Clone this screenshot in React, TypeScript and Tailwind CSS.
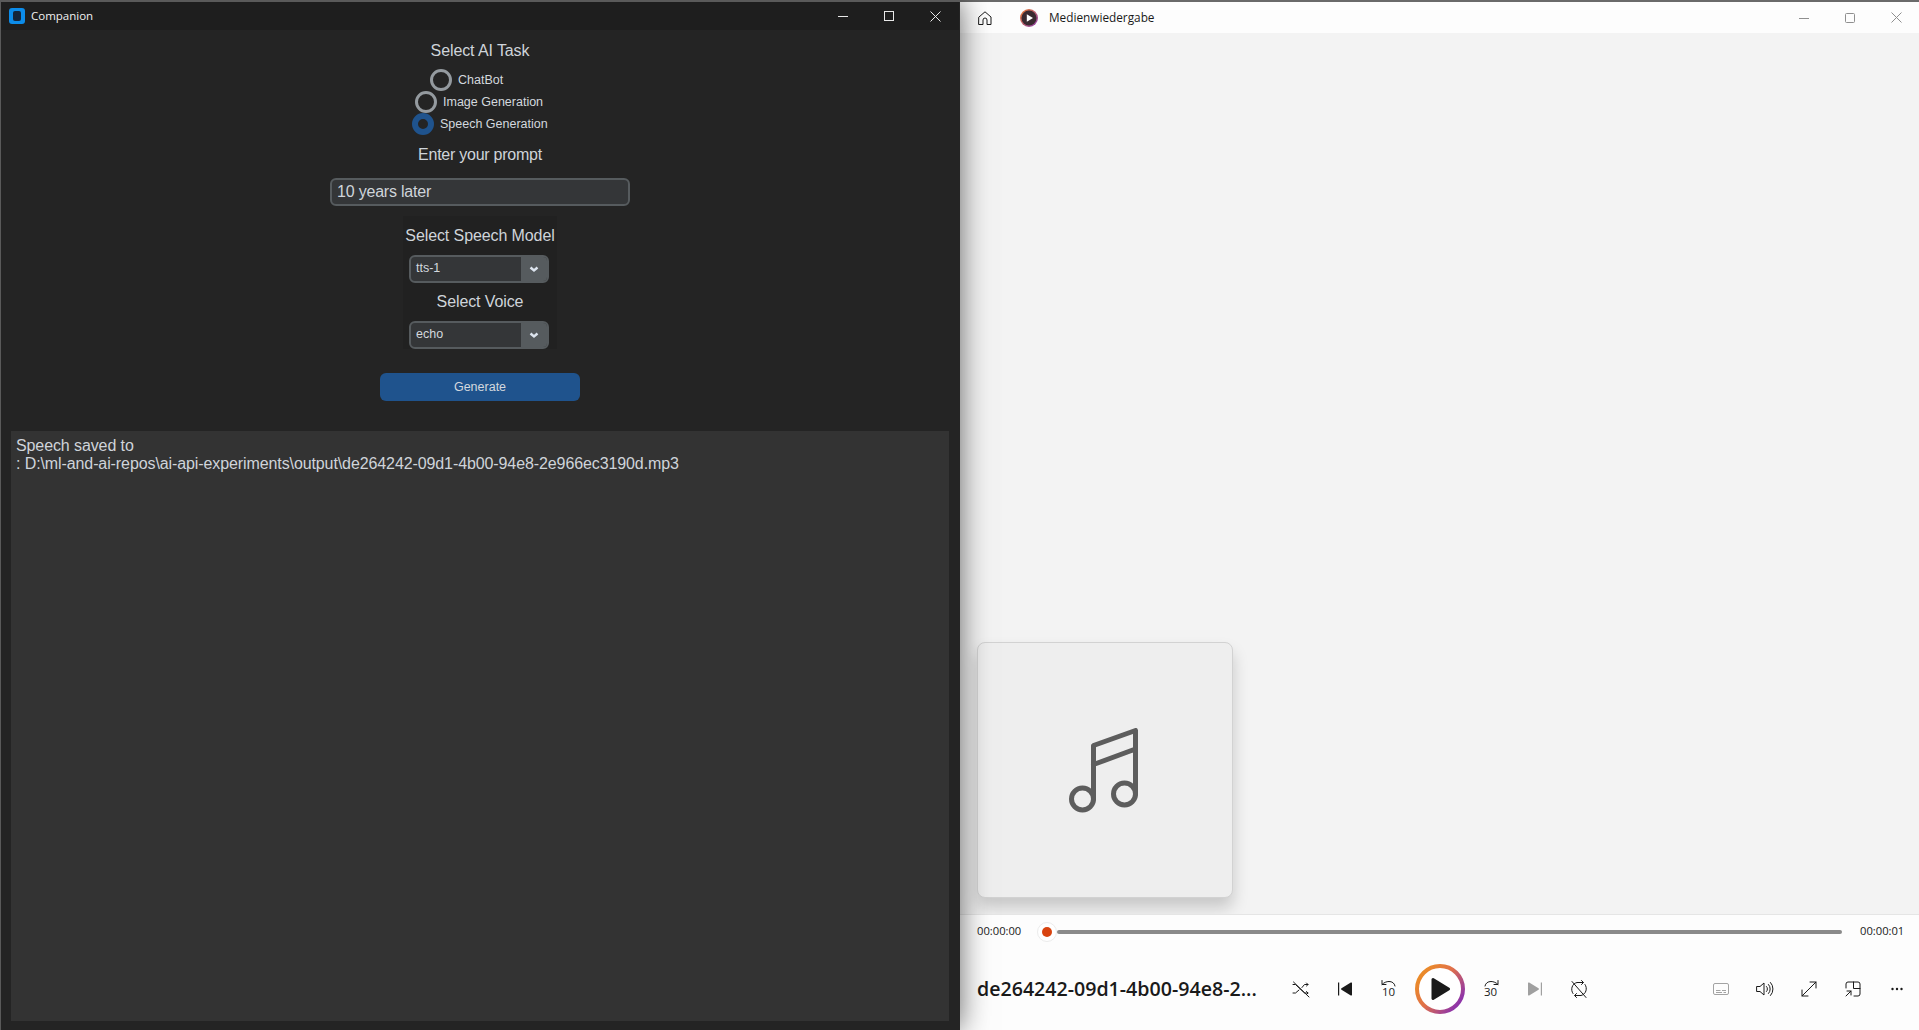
import React from "react";

const sans = "font-['Liberation_Sans',Arial,sans-serif]";
const ui = "font-['Open_Sans','Noto_Sans',sans-serif]";

function Radio({ label, on, left }: { label: string; on?: boolean; left: string }) {
  return (
    <div className={`flex h-[22px] items-center gap-[6px] ${left}`}>
      <span className={`box-border h-[22px] w-[22px] rounded-full ${on ? "border-[6px] border-[#1f538d]" : "border-[3px] border-[#949a9f]"}`} />
      <span className="text-[12.5px] leading-none text-[#d3d8de]">{label}</span>
    </div>
  );
}

function Combo({ value }: { value: string }) {
  return (
    <div className="box-border flex h-[28px] w-[140px] overflow-hidden rounded-[6px] border-2 border-[#565b5e] bg-[#343638]">
      <span className="flex-1 pl-[5px] text-[12.5px] leading-[22px] tracking-normal text-[#d3d8de]">{value}</span>
      <span className="flex w-[26px] items-center justify-center bg-[#565b5e]">
        <svg width="10" height="7" viewBox="0 0 10 7" fill="none" stroke="#dce4ee" strokeWidth="2.400"><path d="M1.500 1.500 5 4.500l3.500-3" /></svg>
      </span>
    </div>
  );
}

const Ico = ({ children, size = 20, vb = 20 }: { children: React.ReactNode; size?: number; vb?: number }) => (
  <svg width={size} height={size} viewBox={`0 0 ${vb} ${vb}`} fill="none" stroke="#1a1a1a" strokeWidth="1" strokeLinecap="round" strokeLinejoin="round">{children}</svg>
);

function Slot({ children, className = "w-[44px]" }: { children: React.ReactNode; className?: string }) {
  return <div className={`flex items-center justify-center ${className}`}>{children}</div>;
}

function Skip({ text, flip }: { text: string; flip?: boolean }) {
  return (
    <div className="relative h-[20px] w-[20px]">
      <svg width="20" height="20" viewBox="0 0 20 20" fill="none" stroke="#1a1a1a" strokeWidth="1" strokeLinecap="round" strokeLinejoin="round" className={flip ? "-scale-x-100" : ""}>
        <path d="M3 1.500v4h4M3 5.500C5 3.500 7.500 2.500 10 2.500c3 0 5.500 1.500 6 4.500" />
      </svg>
      <span className={`absolute left-[3px] top-[6px] text-[11.500px] leading-[14px] text-[#1a1a1a] ${ui}`}>{text}</span>
    </div>
  );
}

export default function App() {
  return (
    <div className={`flex h-[1030px] w-[1919px] overflow-hidden ${sans}`}>
      {/* Companion window */}
      <div className="relative z-10 flex w-[960px] shrink-0 flex-col border-l border-t-2 border-[#5a5a5a] bg-[#242424] pr-px shadow-[0_0_28px_rgba(0,0,0,0.6)]">
        <div className="flex h-[28px] shrink-0 items-center bg-[#1e1e1e]">
          <svg className="ml-[8px]" width="16" height="16" viewBox="0 0 16 16"><rect width="16" height="16" rx="3" fill="#0c8ce9" /><rect x="4" y="3" width="8" height="10" rx="2" fill="#14253a" /></svg>
          <span className={`ml-[6px] text-[11.500px] text-[#f0f0f0] ${ui}`}>Companion</span>
          <div className="ml-auto flex items-center pr-[1px]">
            <Slot className="w-[46px]"><svg width="10" height="10" viewBox="0 0 10 10" stroke="#e8e8e8"><path d="M0 5.500h10" /></svg></Slot>
            <Slot className="w-[46px]"><svg width="10" height="10" viewBox="0 0 10 10" fill="none" stroke="#e8e8e8"><rect x=".5" y=".5" width="9" height="9" /></svg></Slot>
            <Slot className="w-[46px]"><svg width="11" height="11" viewBox="0 0 11 11" stroke="#e8e8e8"><path d="m.5.500 10 10M10.500.500l-10 10" /></svg></Slot>
          </div>
        </div>
        <div className="flex flex-col items-center pt-[12px] tracking-[-0.1px]">
          <div className="text-[16px] leading-[18px] text-[#cfd4da]">Select AI Task</div>
          <div className="mt-[9px] flex w-full flex-col tracking-normal">
            <Radio label="ChatBot" left="ml-[429px]" />
            <Radio label="Image Generation" left="ml-[414px]" />
            <Radio label="Speech Generation" on left="ml-[411px]" />
          </div>
          <div className="mt-[11px] text-[16px] leading-[18px] tracking-[-0.25px] text-[#cfd4da]">Enter your prompt</div>
          <div className="mt-[14px] box-border flex h-[28px] w-[300px] items-center rounded-[6px] border-2 border-[#565b5e] bg-[#343638] pl-[5px] text-[16px] tracking-[-0.2px] text-[#cfd4da]">10 years later</div>
          <div className="mt-[10px] flex flex-col items-center bg-[#212121] px-[4px] pt-[11px]">
            <div className="-mx-[2px] text-[16px] leading-[18px] text-[#cfd4da]">Select Speech Model</div>
            <div className="mr-[2px] mt-[10px]"><Combo value="tts-1" /></div>
            <div className="mt-[10px] text-[16px] leading-[18px] text-[#cfd4da]">Select Voice</div>
            <div className="mr-[2px] mt-[10px]"><Combo value="echo" /></div>
          </div>
          <button className="mt-[24px] h-[28px] w-[200px] rounded-[6px] bg-[#1f538d] text-[12.500px] tracking-normal text-[#d3d8de]">Generate</button>
        </div>
        <div className="mx-[10px] mb-[9px] mt-[30px] flex-1 bg-[#333333] pl-[5px] pt-[6px] text-[16px] leading-[18px] tracking-[-0.1px] text-[#cfd4da]">
          <div>Speech saved to</div>
          <div>: D:\ml-and-ai-repos\ai-api-experiments\output\de264242-09d1-4b00-94e8-2e966ec3190d.mp3</div>
        </div>
      </div>

      {/* Media player window */}
      <div className={`flex min-w-0 flex-1 flex-col border-t-2 border-[#6a6a6a] bg-[#f3f3f3] ${ui}`}>
        <div className="flex h-[31px] shrink-0 items-center bg-[#fdfdfd]">
          <div className="ml-[17px]">
            <Ico size={16} vb={16}><path d="M2 7 8 1.800 14 7v7.500h-4V10a2 2 0 0 0-4 0v4.500H2z" /></Ico>
          </div>
          <svg className="ml-[27px]" width="18" height="18" viewBox="0 0 18 18">
            <defs><linearGradient id="ic" x1="0" y1="0" x2="1" y2="1"><stop offset="0" stopColor="#e87b2c" /><stop offset="1" stopColor="#8a3fb0" /></linearGradient></defs>
            <circle cx="9" cy="9" r="9" fill="url(#ic)" /><circle cx="9" cy="9" r="7.500" fill="#3a2a30" /><path d="M6.800 5.300v7.400L13 9z" fill="#fff" />
          </svg>
          <span className="ml-[11px] text-[11.800px] text-[#1a1a1a]">Medienwiedergabe</span>
          <div className="ml-auto flex items-center">
            <Slot className="w-[46px]"><svg width="10" height="10" viewBox="0 0 10 10" stroke="#8f8f8f"><path d="M0 5.500h10" /></svg></Slot>
            <Slot className="w-[46px]"><svg width="10" height="10" viewBox="0 0 10 10" fill="none" stroke="#8f8f8f"><rect x=".5" y=".5" width="9" height="9" rx="1" /></svg></Slot>
            <Slot className="w-[46px]"><svg width="11" height="11" viewBox="0 0 11 11" stroke="#8f8f8f"><path d="m.5.500 10 10M10.500.500l-10 10" /></svg></Slot>
          </div>
        </div>
        <div className="flex flex-1 items-end px-[17px] pb-[16px]">
          <div className="box-border flex h-[256px] w-[256px] items-center justify-center rounded-[8px] border border-[#d2d2d2] bg-[#eeeeee] shadow-[0_10px_16px_rgba(0,0,0,0.18)]">
            <svg className="mt-[2px]" width="72" height="86" viewBox="0 0 72 86" fill="none" stroke="#5d5d5d" strokeWidth="5" strokeLinecap="round" strokeLinejoin="round">
              <circle cx="13.500" cy="71" r="11" />
              <circle cx="55.500" cy="66" r="11" />
              <path d="M24.500 71V17.500L66.500 2.500V66M24.500 36.500 66.500 21" />
            </svg>
          </div>
        </div>
        <div className="h-[116px] shrink-0 border-t border-[#e5e5e5] bg-[#fdfdfd]">
          <div className="flex h-[33px] items-center pl-[17px] pr-[16px] text-[11.200px] text-[#1a1a1a]">
            <span className="w-[44px]">00:00:00</span>
            <span className="ml-[16px] flex h-[20px] w-[20px] items-center justify-center rounded-full border border-[#ececec] bg-white">
              <span className="h-[10px] w-[10px] rounded-full bg-[#d8430f]" />
            </span>
            <span className="h-[4px] flex-1 rounded-full bg-[#8a8a8a]" />
            <span className="ml-[18px] w-[43px]">00:00:01</span>
          </div>
          <div className="mt-[9px] flex h-[64px] items-center pl-[17px]">
            <div className="w-[281px] whitespace-nowrap text-[19.600px] font-semibold leading-[28px] text-[#1a1a1a]">de264242-09d1-4b00-94e8-2...</div>
            <div className="ml-[21px] flex items-center">
              <Slot>
                <svg width="18" height="18" viewBox="0 0 18 18" fill="none" stroke="#1a1a1a" strokeWidth="1" strokeLinecap="round" strokeLinejoin="round">
                  <path d="M1 4.500h2.500l9 8.500H16M1 13h2.500L7 10M10 7.500l2.500-3H16M14.500 3 16 4.500 14.500 6M14.500 11.500 16 13l-1.500 1.500M1.500 2 17 17" />
                </svg>
              </Slot>
              <Slot>
                <svg width="16" height="16" viewBox="0 0 16 16" fill="#1a1a1a"><rect x="1" y="1.500" width="1.200" height="13" /><path d="M15 2.200v11.600a.8.800 0 0 1-1.200.7L4.500 8.700a.8.800 0 0 1 0-1.400l9.300-5.800a.8.800 0 0 1 1.200.7z" /></svg>
              </Slot>
              <Slot><Skip text="10" /></Slot>
              <Slot className="w-[58px]">
                <svg width="50" height="50" viewBox="0 0 50 50">
                  <defs>
                    <linearGradient id="ring" x1="0.100" y1="0.200" x2="0.900" y2="0.800">
                      <stop offset="0" stopColor="#ea8a2a" /><stop offset="0.450" stopColor="#e0704a" /><stop offset="1" stopColor="#8f35a8" />
                    </linearGradient>
                  </defs>
                  <circle cx="25" cy="25" r="23" fill="#fff" stroke="url(#ring)" strokeWidth="4" />
                  <path d="M16.500 15.500v19a1.500 1.500 0 0 0 2.300 1.300l15.500-9.500a1.500 1.500 0 0 0 0-2.600L18.800 14.200a1.500 1.500 0 0 0-2.300 1.300z" fill="#1a1a1a" />
                </svg>
              </Slot>
              <Slot><Skip text="30" flip /></Slot>
              <Slot>
                <svg width="16" height="16" viewBox="0 0 16 16" fill="#a0a0a0"><rect x="13.800" y="1.500" width="1.200" height="13" /><path d="M1 2.200v11.600a.8.800 0 0 0 1.200.7l9.300-5.800a.8.800 0 0 0 0-1.400L2.200 1.500A.8.800 0 0 0 1 2.200z" /></svg>
              </Slot>
              <Slot>
                <Ico>
                  <path d="M4 14.500A7 7 0 0 1 8 3.500h6M12.500 1.500l2 2-2 2M16 5.500A7 7 0 0 1 12 16.500H6M7.500 14.500l-2 2 2 2M3 2.500l14 16" />
                </Ico>
              </Slot>
            </div>
            <div className="ml-auto flex items-center">
              <Slot>
                <svg width="16" height="14" viewBox="0 0 16 14" fill="none" stroke="#a3a3a3"><rect x=".5" y="1.500" width="15" height="11" rx="1.500" /><path d="M3 8.500h4.500M9 8.500h4M3 10.500h6M10.500 10.500H13" /></svg>
              </Slot>
              <Slot>
                <Ico>
                  <path d="M2 7.500h3L9 4v12l-4-3.500H2zM11.500 7.500a3.500 3.500 0 0 1 0 5M13.500 5.500a6.500 6.500 0 0 1 0 9M15.500 3.500a9.500 9.500 0 0 1 0 13" />
                </Ico>
              </Slot>
              <Slot>
                <Ico size={16} vb={16}><path d="M1 15 15 1M9 1h6v6M1 9v6h6" /></Ico>
              </Slot>
              <Slot>
                <Ico size={16} vb={16}><path d="M1 7V3a2 2 0 0 1 2-2h10a2 2 0 0 1 2 2v10a2 2 0 0 1-2 2H9M8.500 1v6.500H15M1 15l5-5M2 10h4v4" /></Ico>
              </Slot>
              <Slot>
                <svg width="12" height="4" viewBox="0 0 12 4" fill="#1a1a1a"><circle cx="1.500" cy="2" r="1.200" /><circle cx="6" cy="2" r="1.200" /><circle cx="10.500" cy="2" r="1.200" /></svg>
              </Slot>
            </div>
          </div>
        </div>
      </div>
    </div>
  );
}
